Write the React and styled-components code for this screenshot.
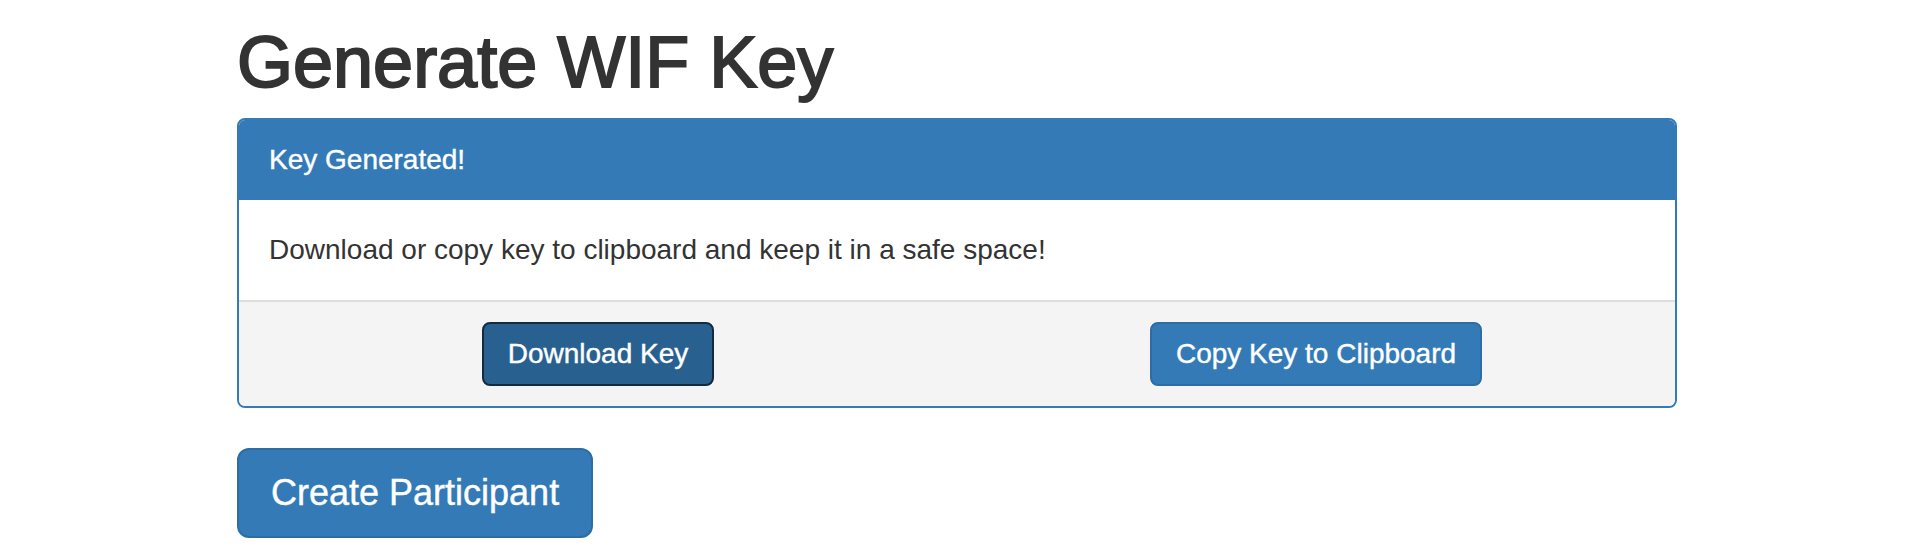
import React from 'react';
import styled, { createGlobalStyle } from 'styled-components';

const GlobalStyle = createGlobalStyle`
	body {
		margin: 0;
		background: #fff;
		font-family: 'Liberation Sans', Arial, sans-serif;
		color: #333;
	}
`;

const Container = styled.div`
	width: 1500px;
	margin: 0 auto;
	padding: 0 30px;
	box-sizing: border-box;
`;

const Title = styled.h1`
	font-size: 72px;
	font-weight: 500;
	line-height: 79px;
	margin: 23px 0 16px;
	color: #333;
	-webkit-text-stroke: 2px #333;
`;

const Panel = styled.div`
	border: 2px solid #337ab7;
	border-radius: 8px;
	overflow: hidden;
	background: #fff;
`;

const PanelHeading = styled.div`
	background: #337ab7;
	color: #fff;
	padding: 20px 30px;
	font-size: 28px;
	line-height: 40px;
	-webkit-text-stroke: 0.4px #fff;
`;

const PanelBody = styled.div`
	padding: 30px;
	font-size: 28px;
	line-height: 40px;
	color: #333;
`;

const PanelFooter = styled.div`
	background: #f4f4f4;
	border-top: 2px solid #ddd;
	padding: 20px 0;
	display: grid;
	grid-template-columns: 1fr 1fr;
`;

const Col = styled.div`
	display: flex;
	justify-content: center;
`;

const Button = styled.button`
	font-family: 'Liberation Sans', Arial, sans-serif;
	font-size: ${({ large }) => (large ? '36px' : '28px')};
	line-height: ${({ large }) => (large ? '48px' : '40px')};
	padding: ${({ large }) => (large ? '19px 32px' : '10px 24px')};
	border-radius: ${({ large }) => (large ? '12px' : '8px')};
	border: 2px solid ${({ active }) => (active ? '#122b40' : '#2e6da4')};
	background: ${({ active }) => (active ? '#286090' : '#337ab7')};
	color: #fff;
	cursor: pointer;
	white-space: nowrap;
	-webkit-text-stroke: 0.4px #fff;
`;

const Actions = styled.div`
	margin-top: 40px;
`;

const App = () => {
	return (
		<>
			<GlobalStyle />
			<Container>
				<Title>Generate WIF Key</Title>
				<Panel>
					<PanelHeading>Key Generated!</PanelHeading>
					<PanelBody>
						Download or copy key to clipboard and keep it in a safe space!
					</PanelBody>
					<PanelFooter>
						<Col>
							<Button active>Download Key</Button>
						</Col>
						<Col>
							<Button>Copy Key to Clipboard</Button>
						</Col>
					</PanelFooter>
				</Panel>
				<Actions>
					<Button large>Create Participant</Button>
				</Actions>
			</Container>
		</>
	);
};

export default App;
